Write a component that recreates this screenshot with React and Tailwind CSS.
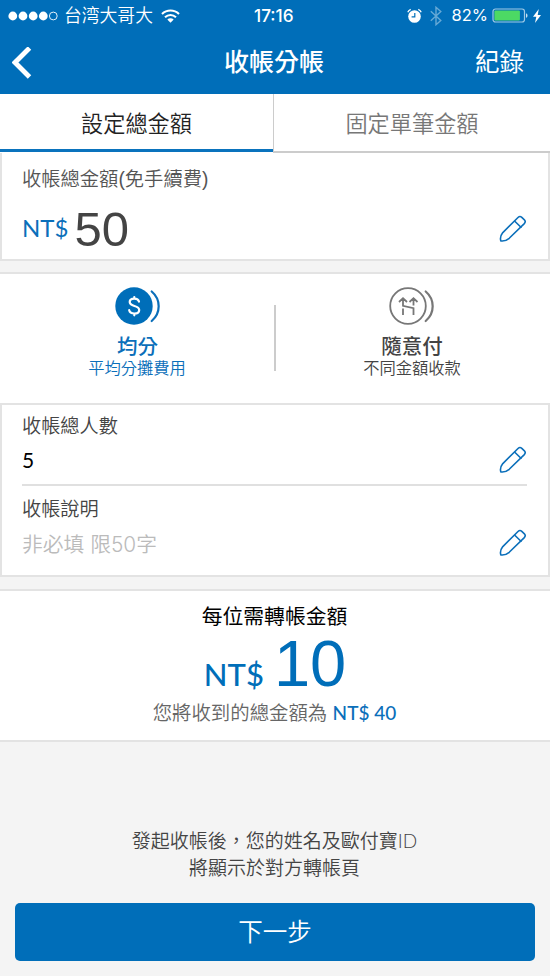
const PencilIcon = () => (
  <svg className="h-7 w-7" viewBox="0 0 28 28" fill="none" stroke="#0b6fba" strokeWidth="1.6" strokeLinejoin="round" strokeLinecap="round">
    <path d="M1.8 25.9c-.7-2.4.2-6 2-8.3L19 2.500c1.300-1.300 2.500-1.300 3.800-.2l2.600 2.500c1.200 1.300 1.100 2.500-.1 3.800L10.200 23.300c-2.300 1.900-5.900 3-8.400 2.600z" />
    <path d="M15.800 6.200l6.200 6" />
  </svg>
);

const StatusBar = () => (
  <div className="flex h-[31px] items-center pl-2 pr-[9px] font-['Inter','Noto_Sans_CJK_SC',sans-serif]">
    <div className="flex w-[246px] items-center">
      <svg className="h-[10px] w-[50px]" viewBox="0 0 50 10">
        {[4.8, 15, 25.2, 35.3].map((cx) => (
          <circle key={cx} cx={cx} cy="5" r="4.4" fill="#fff" />
        ))}
        <circle cx="45.3" cy="5" r="3.9" fill="none" stroke="#fff" strokeWidth="0.9" />
      </svg>
      <span className="pl-1.5 text-[17.8px] font-[350] leading-[31px]">台湾大哥大</span>
      <svg className="ml-2 h-[14px] w-[19px]" viewBox="0 0 19 14" fill="none" stroke="#fff" strokeWidth="2.1">
        <path d="M1 5c4.800-4.600 12.200-4.600 17 0" />
        <path d="M4 8.200c3.200-3 7.800-3 11 0" />
        <path d="M6.300 10.500c1.900-1.700 4.500-1.700 6.400 0L9.500 13.700z" fill="#fff" stroke="none" />
      </svg>
    </div>
    <span className="text-[17.2px] font-medium leading-[31px]">17:16</span>
    <div className="ml-auto flex items-center">
      <svg className="h-4 w-[15px]" viewBox="0 0 15 16" fill="none">
        <circle cx="7.500" cy="8.500" r="6.300" fill="#fff" />
        <path d="M.8 4.300C1.300 2.800 2.300 1.900 3.700 1.300M14.200 4.300c-.5-1.500-1.500-2.400-2.900-3" stroke="#fff" strokeWidth="1.300" />
        <path d="M7.800 4.900v4H4.600" stroke="#0070ba" strokeWidth="1.200" />
      </svg>
      <svg className="ml-2 h-5 w-3" viewBox="0 0 12 20" fill="none" stroke="#66a9d6" strokeWidth="1.4">
        <path d="M.8 5.300l10 9.200L6 18.700V1.300l4.800 4.200-10 9.200" />
      </svg>
      <span className="ml-[10px] text-[16.5px] leading-[31px]">82%</span>
      <svg className="ml-1 h-[15px] w-[36px]" viewBox="0 0 36 15">
        <rect x="1" y="1" width="31.500" height="13" rx="2.500" fill="none" stroke="#9fc9e6" strokeWidth="1.200" />
        <rect x="2.400" y="2.400" width="25.500" height="10.200" rx="1" fill="#4cd964" />
        <path d="M34 5.200c2 .8 2 3.800 0 4.600z" fill="#c5dff0" />
      </svg>
      <svg className="ml-[5px] h-[14px] w-2" viewBox="0 0 8 14" fill="#fff">
        <path d="M5.800 0L0 7.800h3.300L2 14l6-8H4.700z" />
      </svg>
    </div>
  </div>
);

const Header = () => (
  <div className="flex h-[63px] items-center justify-between pl-3 pr-[26px]">
    <svg className="h-8 w-[92px]" viewBox="0 0 92 32" fill="none" stroke="#fff" strokeWidth="4.9">
      <path d="M17.500 1L3 15.500 17.500 30" />
    </svg>
    <h1 className="text-[25px] font-medium">收帳分帳</h1>
    <button type="button" className="w-[80px] pt-px text-right text-[24.5px]">紀錄</button>
  </div>
);

const EqualIcon = () => (
  <svg className="h-[38px] w-[46px]" viewBox="0 0 46 38" fill="none">
    <circle cx="19" cy="19" r="18.700" fill="#006eb9" />
    <path d="M36.700 4.500c9.300 8 9.300 21.500 0 29.500" stroke="#0b6fba" strokeWidth="2.2" strokeLinecap="round" />
    <path d="M24 14.600c-.5-2-2.300-3-4.700-3-2.700 0-4.600 1.300-4.600 3.500 0 5 9.500 2.700 9.500 7.800 0 2.300-2 3.600-4.800 3.600-2.700 0-4.800-1.100-5.200-3.400M19.300 10v1.500M19.300 26.500V28.300" stroke="#fff" strokeWidth="2.200" strokeLinecap="round" />
  </svg>
);

const FreeIcon = () => (
  <svg className="h-[38px] w-[46px]" viewBox="0 0 46 38" fill="none" stroke="#777" strokeWidth="1.8">
    <circle cx="19" cy="19" r="17.800" />
    <path d="M36.700 4.500c9.300 8 9.300 21.500 0 29.500" strokeLinecap="round" strokeWidth="2.2" />
    <path d="M14 28v-6.500M14 12v6.800l10.500 2.400V28M24.500 12v6.500M10 15l4-3.800 4 3.800M20.500 15l4-3.800 4 3.800" />
  </svg>
);

const Field = ({ label, children }) => (
  <div className="flex h-[83px] items-end justify-between pb-[14px]">
    <div className="h-[62px]">
      <p className="text-[19.2px] font-[350] leading-[30px] text-[#444]">{label}</p>
      <div className="flex h-[39px] items-center">{children}</div>
    </div>
    <PencilIcon />
  </div>
);

export default function App() {
  return (
    <div className="flex h-[976px] w-full flex-col bg-[#f4f4f4] font-['Liberation_Sans','Noto_Sans_CJK_TC',sans-serif] text-[#444]">
      <header className="h-[94px] bg-[#006eb9] text-white">
        <StatusBar />
        <Header />
      </header>

      <nav className="flex h-[59px] bg-white text-[22.2px] font-[350]">
        <div className="mb-px flex w-[273px] items-center justify-center border-b-3 border-[#0a73bd] pt-[6px] text-[#222]">設定總金額</div>
        <div className="flex flex-1 items-center justify-center border-b-2 border-l border-[#ccc] pt-[4px] text-[#777]">固定單筆金額</div>
      </nav>

      <section className="flex h-[108px] items-end justify-between border-2 border-t-0 border-[#e3e3e3] bg-white pb-4 pl-5 pr-[21px]">
        <div className="h-[77px]">
          <p className="text-[19.3px] font-[350] leading-[28px] text-[#555]">收帳總金額(免手續費)</p>
          <div className="mt-[13px] flex items-start">
            <span className="font-['Lato'] text-[24px] leading-[42px] text-[#0b6fba]">NT$</span>
            <span className="ml-1.5 pt-px text-[49px] leading-[42px]">50</span>
          </div>
        </div>
        <PencilIcon />
      </section>

      <section className="mt-[11px] flex h-[131px] items-start border-t-2 border-[#e3e3e3] bg-white">
        <div className="flex w-[275px] flex-col items-center pt-[13px] text-[#0b6fba]">
          <EqualIcon />
          <p className="mt-[9px] text-[20.5px] font-medium leading-[26px]">均分</p>
          <p className="-mt-[2px] mr-px text-[16.3px] font-[350] leading-[20px]">平均分攤費用</p>
        </div>
        <div className="-ml-px mt-[31px] h-[66px] w-[2px] bg-[#ccc]" />
        <div className="flex flex-1 flex-col items-center pr-[2px] pt-[13px]">
          <FreeIcon />
          <p className="mt-[9px] text-[20.5px] font-medium leading-[26px]">隨意付</p>
          <p className="-mt-[2px] text-[16.3px] font-[350] leading-[20px] text-[#444]">不同金額收款</p>
        </div>
      </section>

      <section className="h-[174px] border-2 border-[#e3e3e3] bg-white pl-5 pr-[21px]">
        <Field label="收帳總人數">
          <span className="pb-1 font-['Lato'] text-[21px] text-black">5</span>
        </Field>
        <div className="-mt-1 h-[2px] bg-[#e0e0e0]" />
        <div className="pt-[2px]">
          <Field label="收帳說明">
            <span className="font-['Inter','Noto_Sans_CJK_TC',sans-serif] text-[20.8px] font-[350] text-[#bbb]">非必填 限50字</span>
          </Field>
        </div>
      </section>

      <section className="mt-3 flex h-[153px] flex-col items-center border-y-2 border-[#e3e3e3] bg-white pt-3">
        <p className="mr-px text-[20.8px] leading-[28px] text-black">每位需轉帳金額</p>
        <div className="flex h-[68px] items-baseline text-[#006eb9]">
          <span className="font-['Lato'] text-[31px] font-medium leading-[66px]">NT$</span>
          <span className="ml-2.5 text-[65px] leading-[66px]">10</span>
        </div>
        <p className="mr-px text-[19.4px] font-[350] leading-[28px] text-[#666]">
          您將收到的總金額為 <span className="font-['Lato'] text-[19px] font-medium text-[#0b6fba]">NT$ 40</span>
        </p>
      </section>

      <footer className="flex flex-1 flex-col justify-end px-[15px] pb-[15px]">
        <p className="mb-[22px] mr-px text-center font-['Lato','Noto_Sans_CJK_TC',sans-serif] text-[19px] font-[350] leading-[26.5px] text-[#444]">
          發起收帳後，您的姓名及歐付寶ID
          <br />
          將顯示於對方轉帳頁
        </p>
        <button type="button" className="h-[58px] rounded-[5px] bg-[#006eb9] pt-[2px] text-[24.5px] font-[350] text-white">下一步</button>
      </footer>
    </div>
  );
}
